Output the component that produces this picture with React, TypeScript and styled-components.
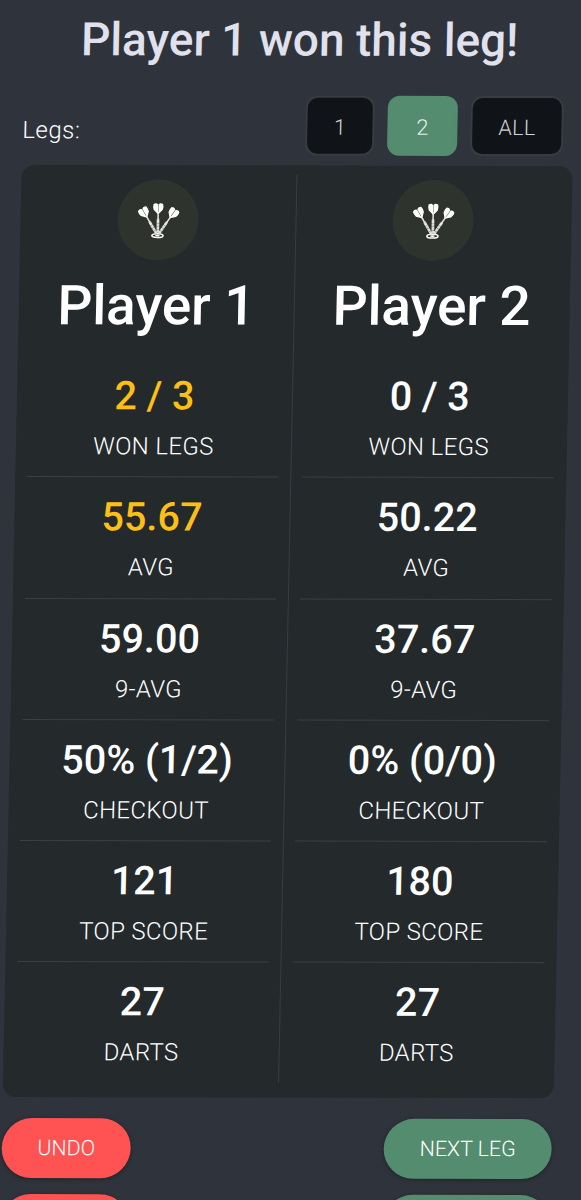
import React from "react";
import styled, { createGlobalStyle } from "styled-components";

const GlobalStyle = createGlobalStyle`
  * { box-sizing: border-box; }
  html, body { margin: 0; height: 1200px; overflow: hidden; background: #2f333b; }
  body { font-family: Roboto, "Liberation Sans", sans-serif; color: #fff; }
`;

const Viewport = styled.div`
  height: 1200px;
  overflow: hidden;
`;

const Screen = styled.main`
  width: 601px;
  height: 1200px;
  padding: 0 25px;
  display: flex;
  flex-direction: column;
  transform-origin: 0 0;
  transform: matrix(1, 0.002, -0.0203, 1, 0, 0);
  & > * { flex: none; }
`;

const Title = styled.h1`
  margin: 0;
  height: 94.5px;
  padding-top: 12px;
  font-size: 46px;
  line-height: 54px;
  font-weight: 500;
  color: #e0e1ec;
  text-align: center;
  white-space: nowrap;
`;

const LegBar = styled.div`
  height: 70.8px;
  display: flex;
  justify-content: space-between;
  align-items: flex-start;
  padding-right: 10px;
`;

const LegLabel = styled.span`
  margin-top: 20.5px;
  font-size: 24px;
  line-height: 30px;
  font-weight: 300;
  letter-spacing: 0.5px;
`;

const LegGroup = styled.div`
  display: flex;
  gap: 13px;
`;

const LegButton = styled.button<{ $width: number; $active?: boolean }>`
  width: ${(p) => p.$width}px;
  height: 60px;
  padding: 3px 0 0;
  border-radius: 12px;
  border: 2px solid ${(p) => (p.$active ? "#538c6e" : "#393b41")};
  background: ${(p) => (p.$active ? "#538c6e" : "#101317")};
  color: ${(p) => (p.$active ? "#e4f0ec" : "#d2d3d7")};
  font: 300 21.6px Roboto, sans-serif;
  letter-spacing: 0.2px;
`;

const Card = styled.section`
  display: flex;
  width: 551px;
  height: 931.5px;
  border-radius: 13px;
  background: #24292c;
  padding: 9px 0 15px;
`;

const Player = styled.article`
  width: 275px;
  padding: 5px 12px 0;
  display: flex;
  flex-direction: column;
  align-items: center;
  & + & { width: 276px; padding: 5px 12.5px 0 11px; border-left: 1px solid #383d41; }
`;

const Avatar = styled.div`
  width: 81px;
  height: 81px;
  flex: none;
  border-radius: 50%;
  background: #2f332e;
  display: grid;
  place-items: center;
`;

const Name = styled.h2`
  margin: 12.5px 0 0;
  height: 83.5px;
  flex: none;
  font-size: 55px;
  line-height: 64px;
  font-weight: 500;
  letter-spacing: -0.1px;
  white-space: nowrap;
`;

const Stat = styled.div`
  width: 100%;
  height: 121.2px;
  flex: none;
  text-align: center;
  border-bottom: 1px solid #3b4043;
  &:last-child { border-bottom: 0; }
`;

const Value = styled.div<{ $best?: boolean }>`
  padding-top: 16px;
  font-size: 39.5px;
  line-height: 48px;
  font-weight: 500;
  color: ${(p) => (p.$best ? "#fcc014" : "#fff")};
`;

const Label = styled.div`
  margin-top: 11px;
  font-size: 24px;
  line-height: 30px;
  font-weight: 300;
  letter-spacing: 0.35px;
`;

const Actions = styled.div`
  display: flex;
  justify-content: space-between;
  margin: 21px 1px 0 0;
`;

const ActionColumn = styled.div`
  display: flex;
  flex-direction: column;
  gap: 16px;
`;

const Action = styled.button<{ $tone: "danger" | "go" }>`
  width: ${(p) => (p.$tone === "danger" ? 129 : 168)}px;
  height: 60px;
  padding: 0;
  border: 0;
  border-radius: 30px;
  background: ${(p) => (p.$tone === "danger" ? "#ff5252" : "#538c6e")};
  box-shadow: 0 1px 4px rgba(0, 0, 0, 0.35);
  color: #fff;
  font: 300 21.4px Roboto, sans-serif;
`;

const Flight = ({ turn }: { turn: string }) => (
  <g transform={turn}>
    <path d="M0-1V-15" stroke="#dcddd8" strokeWidth="2.7" strokeDasharray="3 .3" />
    <path d="M0-11V-22" stroke="#e8e8e5" strokeWidth="1.5" />
    <path d="M-.2-19.5 L-4.6-24 Q-5.6-27.5-4.8-29.8 Q-2-31.6-.2-29.4Z M.2-19.5 L4.6-24 Q5.6-27.5 4.8-29.8 Q2-31.6 .2-29.4Z" fill="#fff" />
  </g>
);

const Darts = () => (
  <svg width="42" height="38" viewBox="0 0 42 38" fill="none">
    <ellipse cx="20.2" cy="34.3" rx="5.6" ry="1.9" stroke="#fff" strokeWidth="1.5" />
    <ellipse cx="20.2" cy="34.3" rx="2.4" ry=".8" fill="#fff" />
    <Flight turn="translate(19.6 33) rotate(-31)" />
    <Flight turn="translate(20.5 32.5)" />
    <Flight turn="translate(21.2 33) rotate(34)" />
  </svg>
);

type Row = { value: string; label: string; best?: boolean };

const players: { name: string; rows: Row[] }[] = [
  {
    name: "Player 1",
    rows: [
      { value: "2 / 3", label: "WON LEGS", best: true },
      { value: "55.67", label: "AVG", best: true },
      { value: "59.00", label: "9-AVG" },
      { value: "50% (1/2)", label: "CHECKOUT" },
      { value: "121", label: "TOP SCORE" },
      { value: "27", label: "DARTS" },
    ],
  },
  {
    name: "Player 2",
    rows: [
      { value: "0 / 3", label: "WON LEGS" },
      { value: "50.22", label: "AVG" },
      { value: "37.67", label: "9-AVG" },
      { value: "0% (0/0)", label: "CHECKOUT" },
      { value: "180", label: "TOP SCORE" },
      { value: "27", label: "DARTS" },
    ],
  },
];

export default function App() {
  return (
    <Viewport>
      <GlobalStyle />
      <Screen>
        <Title>Player 1 won this leg!</Title>
        <LegBar>
          <LegLabel>Legs:</LegLabel>
          <LegGroup>
            <LegButton $width={69}>1</LegButton>
            <LegButton $width={70} $active>2</LegButton>
            <LegButton $width={93}>ALL</LegButton>
          </LegGroup>
        </LegBar>
        <Card>
          {players.map((p) => (
            <Player key={p.name}>
              <Avatar><Darts /></Avatar>
              <Name>{p.name}</Name>
              {p.rows.map((r) => (
                <Stat key={r.label}>
                  <Value $best={r.best}>{r.value}</Value>
                  <Label>{r.label}</Label>
                </Stat>
              ))}
            </Player>
          ))}
        </Card>
        <Actions>
          <ActionColumn>
            <Action $tone="danger">UNDO</Action>
            <Action $tone="danger" />
          </ActionColumn>
          <ActionColumn>
            <Action $tone="go">NEXT LEG</Action>
            <Action $tone="go" />
          </ActionColumn>
        </Actions>
      </Screen>
    </Viewport>
  );
}
